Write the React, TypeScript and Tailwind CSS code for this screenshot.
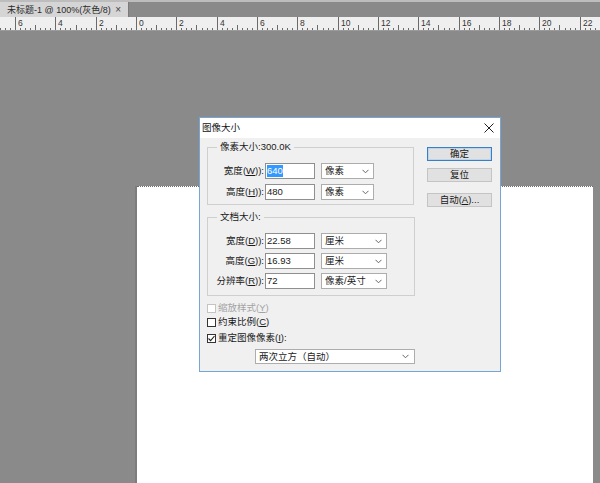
import React from "react";

const FONT = { fontFamily: '"Liberation Sans", "Noto Sans CJK SC", sans-serif' };

function Ruler() {
  const majors: number[] = [];
  for (let k = -4; k <= 12; k++) majors.push(k);
  const step = 40.33;
  const origin = 136;
  const ticks: React.ReactNode[] = [];
  majors.forEach((k) => {
    const x0 = origin + k * step;
    for (let i = 1; i < 8; i++) {
      const x = Math.round(x0 + (i * step) / 8) + 0.5;
      const h = i === 4 ? 5 : 2;
      ticks.push(<line key={`t${k}-${i}`} x1={x} x2={x} y1={13 - h} y2={13} stroke="#6a6a6a" strokeWidth={1} />);
    }
    const xm = Math.round(x0) + 0.5;
    ticks.push(<line key={`m${k}`} x1={xm} x2={xm} y1={0} y2={13} stroke="#6a6a6a" strokeWidth={1} />);
    if (xm > 0 && xm < 585) {
      ticks.push(
        <text key={`n${k}`} x={xm + 2.5} y={8.5} fontSize={8.5} fill="#333" fontFamily='"Liberation Sans", sans-serif'>
          {Math.abs(k * 2)}
        </text>
      );
    }
  });
  return (
    <svg width={600} height={13} className="block flex-none bg-[#efefef]">
      {ticks}
    </svg>
  );
}

function Chevron() {
  return (
    <svg width={7} height={5} viewBox="0 0 7 5" className="flex-none">
      <polyline points="0.5,0.8 3.5,3.8 6.5,0.8" fill="none" stroke="#666" strokeWidth={1} />
    </svg>
  );
}

function Input({ value, selected }: { value: string; selected?: boolean }) {
  return (
    <div className="w-[50px] h-[16px] bg-white border border-[#8f8f8f] flex items-center pl-[1px] leading-[12px]">
      {selected ? <span className="bg-[#3399ff] text-white">{value}</span> : <span className="text-[#1a1a1a]">{value}</span>}
    </div>
  );
}

function Select({ value, w }: { value: string; w: string }) {
  return (
    <div className={`${w} h-[16px] bg-white border border-[#adadad] flex items-center justify-between pl-[3px] pr-[4px] leading-[12px] text-[#1a1a1a]`}>
      <span>{value}</span>
      <Chevron />
    </div>
  );
}

function Row({ label, u, rest, input, select, sw, selected }: { label: string; u: string; rest: string; input: string; select: string; sw: string; selected?: boolean }) {
  return (
    <div className="flex items-center h-[16px]">
      <div className="w-[57px] text-right pr-[1px] leading-[12px] text-[#1a1a1a] whitespace-nowrap">
        {label}(<u>{u}</u>){rest}
      </div>
      <Input value={input} selected={selected} />
      <div className="ml-[6px]">
        <Select value={select} w={sw} />
      </div>
    </div>
  );
}

function Check({ checked, disabled, children }: { checked?: boolean; disabled?: boolean; children: React.ReactNode }) {
  return (
    <div className="flex items-center h-[14px]">
      <div className={`w-[9px] h-[9px] border bg-white flex items-center justify-center ${disabled ? "border-[#c4c4c4]" : "border-[#333]"}`}>
        {checked && (
          <svg width={7} height={7} viewBox="0 0 7 7">
            <polyline points="0.5,3.5 2.6,5.6 6.5,1" fill="none" stroke="#222" strokeWidth={1.1} />
          </svg>
        )}
      </div>
      <span className={`ml-[2px] leading-[12px] whitespace-nowrap ${disabled ? "text-[#a3a3a3]" : "text-[#1a1a1a]"}`}>{children}</span>
    </div>
  );
}

function Btn({ children, def }: { children: React.ReactNode; def?: boolean }) {
  return (
    <div
      className={`w-[65px] h-[14px] flex items-center justify-center leading-[12px] text-[#1a1a1a] bg-[#e1e1e1] border ${
        def ? "border-[#3a7fc4] shadow-[inset_0_0_0_1px_#bcd4ec]" : "border-[#c4c4c4]"
      }`}
    >
      {children}
    </div>
  );
}

export default function App() {
  return (
    <div className="w-[600px] h-[483px] bg-[#8a8a8a] flex flex-col overflow-hidden relative text-[9.5px]" style={FONT}>
      {/* tab bar */}
      <div className="h-[17px] flex-none border-t-[2px] border-[#bdbdbd] flex">
        <div className="w-[128px] h-[15px] bg-[#d5d5d5] flex items-center pl-[7px] pr-[7px] text-[#2a2a2a] leading-[12px] text-[9px]">
          <span className="whitespace-nowrap">未标题-1 @ 100%(灰色/8)</span>
          <span className="ml-auto text-[10px] text-[#444]">×</span>
        </div>
        <div className="flex-1 border-l border-[#7a7a7a]" />
      </div>
      {/* ruler */}
      <Ruler />
      <div className="h-[1px] flex-none bg-[#9a9a9a]" />
      {/* pasteboard */}
      <div className="flex-1 flex pt-[155px] pl-[135px]">
        <div className="w-[2px] bg-[#7d7d7d]" />
        <div className="w-[456px] bg-white border-t border-dotted border-[#6f6f6f]" />
      </div>

      {/* dialog */}
      <div className="absolute left-[199px] top-[117px] w-[302px] h-[255px] border border-[#76a6d6] bg-[#f0f0f0] flex flex-col">
        <div className="h-[20px] flex-none bg-white flex items-center pl-[2px] pr-[6px]">
          <span className="leading-[12px] text-[#111]">图像大小</span>
          <svg width={10} height={10} viewBox="0 0 10 10" className="ml-auto">
            <path d="M0.5 0.5 L9.5 9.5 M9.5 0.5 L0.5 9.5" stroke="#222" strokeWidth={1} />
          </svg>
        </div>
        <div className="flex flex-1 pl-[7px] pr-[7px] pt-[9px]">
          {/* left column */}
          <div className="w-[208px] flex flex-col">
            <div className="relative w-[207px] border border-[#cfcfcf] pt-[15px] pb-[4px] flex flex-col gap-[5px]">
              <span className="absolute left-[9px] -top-[7px] bg-[#f0f0f0] px-[3px] leading-[12px] text-[#1a1a1a] whitespace-nowrap">像素大小:300.0K</span>
              <Row label="宽度" u="W" rest="):" input="640" select="像素" sw="w-[53px]" selected />
              <Row label="高度" u="H" rest="):" input="480" select="像素" sw="w-[53px]" />
            </div>
            <div className="relative mt-[12px] w-[208px] border border-[#cfcfcf] pt-[15px] pb-[6px] flex flex-col gap-[4px]">
              <span className="absolute left-[9px] -top-[7px] bg-[#f0f0f0] px-[3px] leading-[12px] text-[#1a1a1a] whitespace-nowrap">文档大小:</span>
              <Row label="宽度" u="D" rest="):" input="22.58" select="厘米" sw="w-[66px]" />
              <Row label="高度" u="G" rest="):" input="16.93" select="厘米" sw="w-[66px]" />
              <Row label="分辨率" u="R" rest="):" input="72" select="像素/英寸" sw="w-[66px]" />
            </div>
            <div className="mt-[5px] flex flex-col">
              <Check disabled>
                缩放样式(<u>Y</u>)
              </Check>
              <Check>
                约束比例(<u>C</u>)
              </Check>
              <div className="mt-[2px]">
                <Check checked>
                  重定图像像素(<u>I</u>):
                </Check>
              </div>
            </div>
            <div className="mt-[4px] ml-[48px]">
              <div className="w-[160px] h-[15px] bg-white border border-[#adadad] flex items-center justify-between pl-[3px] pr-[5px] leading-[12px] text-[#1a1a1a]">
                <span>两次立方（自动）</span>
                <Chevron />
              </div>
            </div>
          </div>
          {/* right column */}
          <div className="ml-[12px] w-[65px] flex flex-col">
            <Btn def>确定</Btn>
            <div className="mt-[7px]">
              <Btn>复位</Btn>
            </div>
            <div className="mt-[11px]">
              <Btn>
                自动(<u>A</u>)...
              </Btn>
            </div>
          </div>
        </div>
      </div>
    </div>
  );
}
